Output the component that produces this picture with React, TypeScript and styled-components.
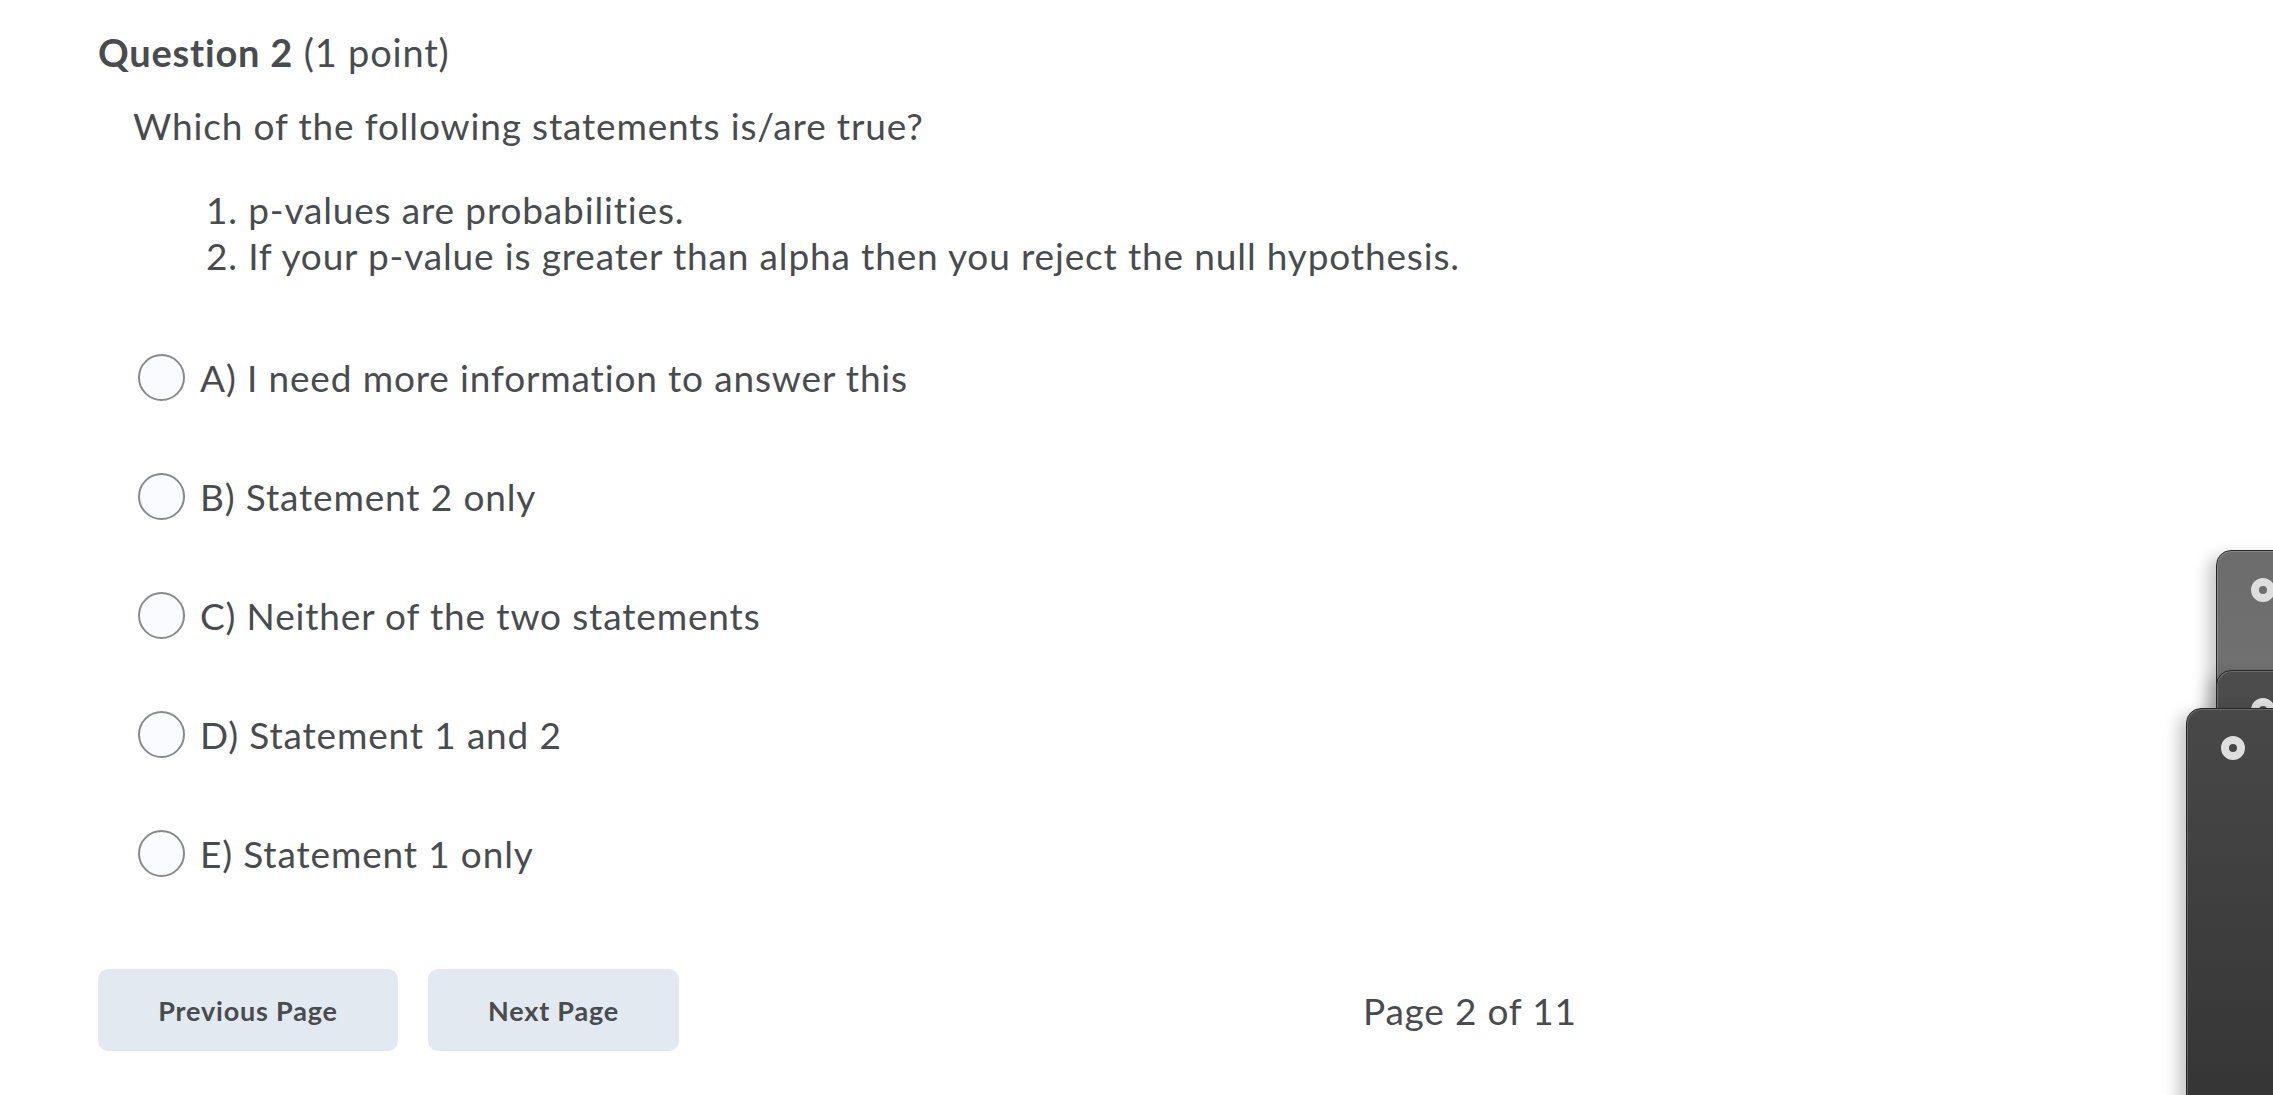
import React from 'react';
import styled, { createGlobalStyle } from 'styled-components';

const textColor = '#494c4e';

const GlobalStyle = createGlobalStyle`
  html, body {
    margin: 0;
    padding: 0;
    background: #ffffff;
    overflow: hidden;
  }
  body {
    font-family: Lato, "Open Sans", "Liberation Sans", sans-serif;
    color: ${textColor};
  }
`;

const Page = styled.main`
  position: relative;
  width: 2273px;
  height: 1095px;
  box-sizing: border-box;
  padding: 29px 0 0 98px;
  overflow: hidden;
`;

const QuestionTitle = styled.h2`
  margin: 0;
  font-size: 38px;
  line-height: 46px;
  letter-spacing: 0.8px;
  font-weight: 400;
  color: ${textColor};

  strong {
    font-weight: 700;
  }
`;

const Prompt = styled.p`
  margin: 28px 0 0 35px;
  font-size: 37px;
  line-height: 46px;
  letter-spacing: 0.85px;
`;

const StatementList = styled.ol`
  margin: 38px 0 0 108px;
  padding: 0;
  list-style: decimal inside;
  font-size: 37px;
  line-height: 46px;
  letter-spacing: 0.85px;
  font-variant-ligatures: none;
`;

const Options = styled.div`
  display: flex;
  flex-direction: column;
  gap: 71px;
  margin: 74px 0 0 40px;
`;

const OptionRow = styled.label`
  display: flex;
  align-items: center;
  gap: 15px;
  height: 48px;
  font-size: 37px;
  letter-spacing: 0.85px;
  font-variant-ligatures: none;
  cursor: pointer;
`;

const Radio = styled.span`
  width: 47px;
  height: 47px;
  box-sizing: border-box;
  border-radius: 50%;
  border: 2px solid #8a8a8a;
  background: #f9fbff;
  flex-shrink: 0;
`;

const Footer = styled.div`
  display: flex;
  align-items: center;
  gap: 30px;
  margin-top: 92px;
`;

const NavButton = styled.button<{ $w: number }>`
  width: ${(p) => p.$w}px;
  height: 82px;
  border: none;
  border-radius: 10px;
  background: #e3e9f1;
  color: ${textColor};
  font-family: Lato, "Open Sans", sans-serif;
  font-size: 27px;
  letter-spacing: 0.8px;
  font-weight: 700;
  cursor: pointer;
`;

const PageCount = styled.span`
  margin-left: 654px;
  font-size: 37px;
  letter-spacing: 0.8px;
`;

const CardStack = styled.div`
  position: absolute;
  top: 550px;
  left: 2186px;
  display: grid;
  pointer-events: none;
`;

const Card = styled.div<{ $dx: number; $dy: number; $from: string; $to: string }>`
  grid-area: 1 / 1;
  margin: ${(p) => p.$dy}px 0 0 ${(p) => p.$dx}px;
  width: 140px;
  height: 600px;
  box-sizing: border-box;
  padding: 27px 0 0 34px;
  border: 1px solid #262626;
  border-radius: 15px;
  background: linear-gradient(180deg, ${(p) => p.$from}, ${(p) => p.$to} 400px);
  box-shadow: -8px 6px 16px rgba(0, 0, 0, 0.22), inset 1px 1px 0 rgba(255, 255, 255, 0.18);
`;

const Ring = styled.span`
  display: block;
  width: 24px;
  height: 24px;
  box-sizing: border-box;
  border-radius: 50%;
  border: 8px solid #dedede;
`;

const options = [
  'A) I need more information to answer this',
  'B) Statement 2 only',
  'C) Neither of the two statements',
  'D) Statement 1 and 2',
  'E) Statement 1 only',
];

export default function App() {
  return (
    <>
      <GlobalStyle />
      <Page>
        <QuestionTitle>
          <strong>Question 2</strong> (1 point)
        </QuestionTitle>
        <Prompt>Which of the following statements is/are true?</Prompt>
        <StatementList>
          <li>p-values are probabilities.</li>
          <li>If your p-value is greater than alpha then you reject the null hypothesis.</li>
        </StatementList>
        <Options>
          {options.map((o) => (
            <OptionRow key={o}>
              <Radio />
              {o}
            </OptionRow>
          ))}
        </Options>
        <Footer>
          <NavButton $w={300}>Previous Page</NavButton>
          <NavButton $w={251}>Next Page</NavButton>
          <PageCount>Page 2 of 11</PageCount>
        </Footer>
        <CardStack>
          <Card $dx={30} $dy={0} $from="#6c6c6c" $to="#7a7a7a">
            <Ring />
          </Card>
          <Card $dx={30} $dy={120} $from="#4c4c4c" $to="#404040">
            <Ring />
          </Card>
          <Card $dx={0} $dy={158} $from="#484848" $to="#353535">
            <Ring />
          </Card>
        </CardStack>
      </Page>
    </>
  );
}
